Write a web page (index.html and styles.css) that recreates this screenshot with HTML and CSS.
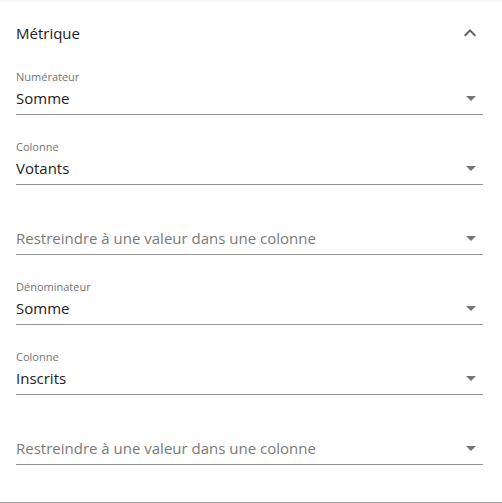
FILE: index.html
```html
<!DOCTYPE html>
<html lang="fr">
    <head>
        <meta charset="UTF-8" />
        <meta name="viewport" content="width=device-width, initial-scale=1.0" />
        <title>Métrique</title>
        <link rel="stylesheet" href="styles.css">
    </head>
    <body>
        <div class="panel">
            <div class="panel-header">
                <span class="panel-title">Métrique</span>
                <svg class="chevron" viewBox="0 0 24 24" width="24" height="24">
                    <path d="M12 8l-6 6 1.41 1.41L12 10.83l4.59 4.58L18 14z"></path>
                </svg>
            </div>
            <div class="fields">
                <div class="field">
                    <div class="label">Numérateur</div>
                    <div class="select">
                        <span class="value">Somme</span>
                        <svg class="arrow" viewBox="0 0 24 24" width="24" height="24"><path d="M7 10l5 5 5-5z"></path></svg>
                    </div>
                </div>
                <div class="field">
                    <div class="label">Colonne</div>
                    <div class="select">
                        <span class="value">Votants</span>
                        <svg class="arrow" viewBox="0 0 24 24" width="24" height="24"><path d="M7 10l5 5 5-5z"></path></svg>
                    </div>
                </div>
                <div class="field">
                    <div class="label"></div>
                    <div class="select">
                        <span class="value placeholder">Restreindre à une valeur dans une colonne</span>
                        <svg class="arrow" viewBox="0 0 24 24" width="24" height="24"><path d="M7 10l5 5 5-5z"></path></svg>
                    </div>
                </div>
                <div class="field">
                    <div class="label">Dénominateur</div>
                    <div class="select">
                        <span class="value">Somme</span>
                        <svg class="arrow" viewBox="0 0 24 24" width="24" height="24"><path d="M7 10l5 5 5-5z"></path></svg>
                    </div>
                </div>
                <div class="field">
                    <div class="label">Colonne</div>
                    <div class="select">
                        <span class="value">Inscrits</span>
                        <svg class="arrow" viewBox="0 0 24 24" width="24" height="24"><path d="M7 10l5 5 5-5z"></path></svg>
                    </div>
                </div>
                <div class="field">
                    <div class="label"></div>
                    <div class="select">
                        <span class="value placeholder">Restreindre à une valeur dans une colonne</span>
                        <svg class="arrow" viewBox="0 0 24 24" width="24" height="24"><path d="M7 10l5 5 5-5z"></path></svg>
                    </div>
                </div>
            </div>
        </div>
    </body>
</html>
```

FILE: styles.css
```css
body {
    margin: 0;
    background-color: #f5f5f5;
    font-family: "Open Sans", Arial, sans-serif;
    color: #212121;
    height: 503px;
    overflow: hidden;
}
.panel {
    margin-top: 2px;
    background-color: #fff;
    border-bottom: 1px solid #9e9e9e;
    height: 500px;
}
.panel-header {
    display: flex;
    justify-content: space-between;
    align-items: center;
    height: 62px;
    padding: 0 20px 0 16px;
}
.panel-title {
    font-size: 15px;
}
.chevron {
    fill: #616161;
}
.fields {
    padding: 6px 19px 0 16px;
}
.field {
    margin-bottom: 25px;
}
.label {
    height: 14px;
    line-height: 14px;
    font-size: 11px;
    color: #757575;
}
.select {
    box-sizing: border-box;
    display: flex;
    justify-content: space-between;
    align-items: center;
    height: 31px;
    padding-bottom: 2px;
    border-bottom: 1px solid #949494;
}
.value {
    font-size: 15px;
    line-height: 20px;
}
.placeholder {
    color: #7a7a7a;
}
.arrow {
    fill: #757575;
}
```
